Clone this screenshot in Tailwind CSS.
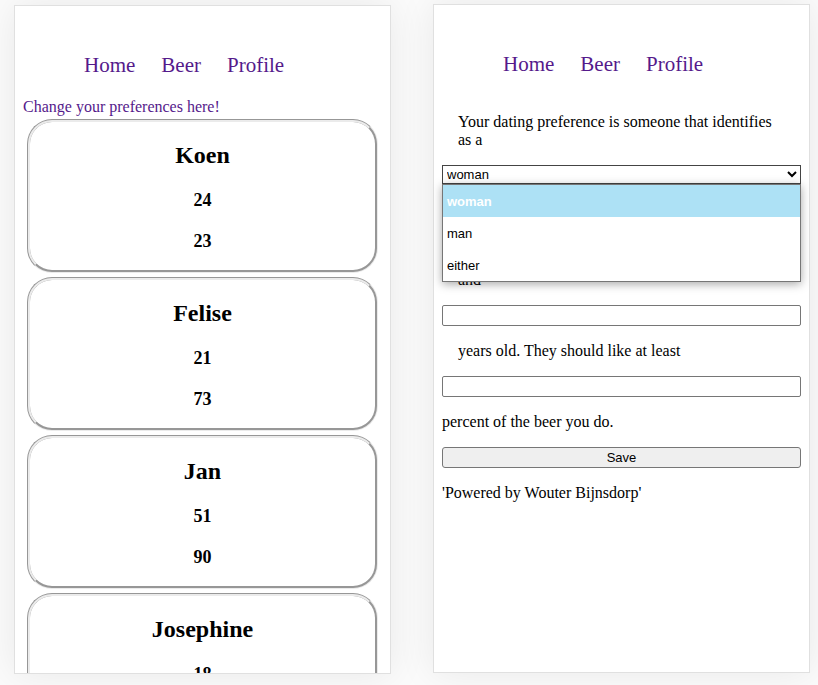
<!DOCTYPE html>
<html lang="en">
<head>
<meta charset="utf-8">
<meta name="viewport" content="width=device-width, initial-scale=1">
<title>Beer dating</title>
<script src="https://cdn.jsdelivr.net/npm/@tailwindcss/browser@4"></script>
</head>
<body class="bg-[#fbfbfb] font-['Liberation_Serif',serif] text-[16px] leading-[18px] text-black">
<div class="flex h-screen gap-[42px] overflow-hidden pr-2 pl-[14px]">

  <!-- Matches -->
  <main class="mt-[5px] mb-[11px] min-w-0 flex-1 overflow-hidden border border-[#e0e0e0] bg-white px-2 pt-[47px] shadow-[0_0_36px_rgba(0,0,0,0.08)]">
    <nav class="mb-[21px] flex gap-[26px] pl-[61px] text-[21px] leading-6 text-[#551a8b]">
      <a href="#home">Home</a>
      <a href="#beer">Beer</a>
      <a href="#profile">Profile</a>
    </nav>
    <a href="#preferences" class="block text-[#551a8b]">Change your preferences here!</a>
    <div class="mx-1 mt-[3px] flex flex-col gap-1 text-center font-bold">
      <article class="rounded-[25px] border-3 border-[#ebebeb] [border-style:groove] pt-[19px] pb-[18px]">
        <h2 class="text-[24px] leading-7">Koen</h2>
        <p class="mt-5 text-[18px] leading-[22px]">24</p>
        <p class="mt-[19px] text-[18px] leading-[22px]">23</p>
      </article>
      <article class="rounded-[25px] border-3 border-[#ebebeb] [border-style:groove] pt-[19px] pb-[18px]">
        <h2 class="text-[24px] leading-7">Felise</h2>
        <p class="mt-5 text-[18px] leading-[22px]">21</p>
        <p class="mt-[19px] text-[18px] leading-[22px]">73</p>
      </article>
      <article class="rounded-[25px] border-3 border-[#ebebeb] [border-style:groove] pt-[19px] pb-[18px]">
        <h2 class="text-[24px] leading-7">Jan</h2>
        <p class="mt-5 text-[18px] leading-[22px]">51</p>
        <p class="mt-[19px] text-[18px] leading-[22px]">90</p>
      </article>
      <article class="rounded-[25px] border-3 border-[#ebebeb] [border-style:groove] pt-[19px] pb-[18px]">
        <h2 class="text-[24px] leading-7">Josephine</h2>
        <p class="mt-5 text-[18px] leading-[22px]">18</p>
      </article>
    </div>
  </main>

  <!-- Preferences -->
  <section class="mt-1 mb-3 min-w-0 flex-1 border border-[#e0e0e0] bg-white px-2 pt-[47px] shadow-[0_0_36px_rgba(0,0,0,0.08)]">
    <nav class="mb-[37px] flex gap-[26px] pl-[61px] text-[21px] leading-6 text-[#551a8b]">
      <a href="#home">Home</a>
      <a href="#beer">Beer</a>
      <a href="#profile">Profile</a>
    </nav>
    <form class="flex flex-col gap-4">
      <label for="gender" class="mx-4">Your dating preference is someone that identifies as a</label>
      <div class="relative">
        <select id="gender" class="block h-[19px] w-full border border-[#444] bg-white font-['Liberation_Sans',sans-serif] text-[13px] leading-4">
          <option selected>woman</option>
          <option>man</option>
          <option>either</option>
        </select>
        <ul role="listbox" aria-label="Gender" class="absolute inset-x-0 top-full border border-[#767676] bg-white font-['Liberation_Sans',sans-serif] text-[13px] leading-[34px] shadow-[0_2px_9px_rgba(0,0,0,0.35)]">
          <li role="option" aria-selected="true" class="h-8 bg-[#ade1f5] px-1 font-bold text-white">woman</li>
          <li role="option" aria-selected="false" class="h-8 px-1">man</li>
          <li role="option" aria-selected="false" class="h-8 px-1">either</li>
        </ul>
      </div>
      <input id="min-age" type="text" aria-label="Minimum age" class="mt-[34px] h-[21px] w-full rounded-[2px] border border-[#767676] px-1">
      <label for="max-age" class="mx-4">and</label>
      <input id="max-age" type="text" class="h-[21px] w-full rounded-[2px] border border-[#767676] px-1">
      <label for="match" class="mx-4">years old. They should like at least</label>
      <input id="match" type="text" class="h-[21px] w-full rounded-[2px] border border-[#767676] px-1">
      <p>percent of the beer you do.</p>
      <button type="button" class="h-[21px] w-full rounded-[3px] border border-[#767676] bg-[#efefef] font-['Liberation_Sans',sans-serif] text-[13px] leading-4">Save</button>
    </form>
    <footer class="mt-4">'Powered by Wouter Bijnsdorp'</footer>
  </section>

</div>
</body>
</html>
